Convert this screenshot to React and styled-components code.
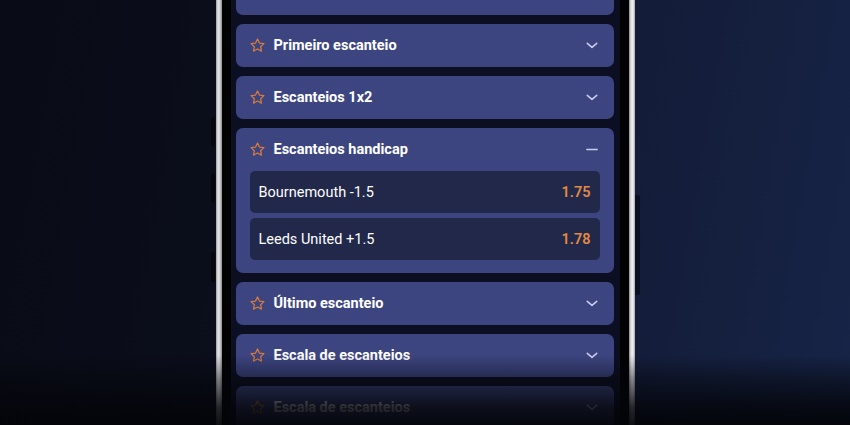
import React, { useState } from "react";
import styled, { createGlobalStyle } from "styled-components";

const markets = [
  { id: "top", title: "Escanteios asiáticos" },
  { id: "first", title: "Primeiro escanteio" },
  { id: "1x2", title: "Escanteios 1x2" },
  {
    id: "handicap",
    title: "Escanteios handicap",
    options: [
      { label: "Bournemouth -1.5", odd: "1.75" },
      { label: "Leeds United +1.5", odd: "1.78" },
    ],
  },
  { id: "last", title: "Último escanteio" },
  { id: "range", title: "Escala de escanteios" },
  { id: "range2", title: "Escala de escanteios" },
];

function Star() {
  return (
    <StarIcon viewBox="0 0 24 24">
      <path d="M12 2.8l2.75 5.75 6.3.8-4.62 4.38 1.17 6.25L12 16.92l-5.6 3.06 1.17-6.25L2.95 9.35l6.3-.8z" />
    </StarIcon>
  );
}

function Chevron() {
  return (
    <ToggleIcon viewBox="0 0 14 8">
      <path d="M1.5 1.5L7 6.2l5.5-4.7" />
    </ToggleIcon>
  );
}

function Minus() {
  return (
    <ToggleIcon viewBox="0 0 14 8">
      <path d="M1 4h12" />
    </ToggleIcon>
  );
}

function App() {
  const [open, setOpen] = useState("handicap");

  return (
    <Page>
      <GlobalStyle />
      <Phone>
        <Screen>
          <List>
            {markets.map((m) => {
              const isOpen = open === m.id && m.options;
              return (
                <Card key={m.id}>
                  <Header onClick={() => setOpen(isOpen ? null : m.id)}>
                    <Star />
                    <Title>{m.title}</Title>
                    {isOpen ? <Minus /> : <Chevron />}
                  </Header>
                  {isOpen && (
                    <Options>
                      {m.options.map((o) => (
                        <Option key={o.label}>
                          <span>{o.label}</span>
                          <Odd>{o.odd}</Odd>
                        </Option>
                      ))}
                    </Options>
                  )}
                </Card>
              );
            })}
          </List>
        </Screen>
      </Phone>
      <BottomFade />
    </Page>
  );
}

export default App;

const GlobalStyle = createGlobalStyle`
  html, body {
    margin: 0;
    padding: 0;
    background: #0a0c18;
  }
  body {
    font-family: Roboto, "Liberation Sans", sans-serif;
  }
`;

const Page = styled.div`
  position: relative;
  width: 850px;
  height: 425px;
  overflow: hidden;
  display: flex;
  justify-content: center;
  background: linear-gradient(100deg, #090b16 0%, #0b0e1c 35%, #121a34 62%, #172447 100%);
`;

const Phone = styled.div`
  position: relative;
  width: 419px;
  height: 425px;
  box-sizing: border-box;
  padding: 0 6px;
  background: linear-gradient(90deg, #9a9a9e 0px, #e6e6e8 2px, #cfcfd2 4px, #8c8c90 6px, transparent 6px, transparent 413px, #8c8c90 413px, #e2e2e4 415px, #f0f0f2 417px, #a4a4a8 419px);

  &::before {
    content: "";
    position: absolute;
    left: -5px;
    top: 117px;
    width: 4px;
    height: 30px;
    border-radius: 2px 0 0 2px;
    background: #06070d;
    box-shadow: 0 56px 0 0 #06070d, 0 135px 0 0 #06070d;
  }

  &::after {
    content: "";
    position: absolute;
    right: -5px;
    top: 195px;
    width: 5px;
    height: 100px;
    border-radius: 0 2px 2px 0;
    background: #0a0f22;
  }
`;

const Screen = styled.div`
  height: 100%;
  box-sizing: border-box;
  border-left: 9px solid #020203;
  border-right: 9px solid #020203;
  background: #0c0f22;
  padding: 0 6px 0 5px;
  overflow: hidden;
`;

const List = styled.div`
  display: flex;
  flex-direction: column;
  gap: 9px;
  margin-top: -28px;
`;

const Card = styled.div`
  background: #3d4581;
  border-radius: 7px;
  padding-bottom: ${(p) => (p.children[1] ? "13px" : "0")};
`;

const Header = styled.div`
  height: 43px;
  display: flex;
  align-items: center;
  padding: 0 16px 0 13px;
  cursor: pointer;
`;

const StarIcon = styled.svg`
  width: 17px;
  height: 17px;
  flex-shrink: 0;
  fill: none;
  stroke: #d67a3e;
  stroke-width: 1.8;
  stroke-linejoin: round;
`;

const Title = styled.span`
  flex: 1;
  margin-left: 8px;
  color: #ffffff;
  font-size: 14.5px;
  font-weight: 700;
`;

const ToggleIcon = styled.svg`
  width: 12px;
  height: 7px;
  fill: none;
  stroke: #c9cdee;
  stroke-width: 1.8;
  stroke-linecap: round;
  stroke-linejoin: round;
`;

const Options = styled.div`
  display: flex;
  flex-direction: column;
  gap: 5px;
  padding: 0 14px;
`;

const Option = styled.div`
  height: 42px;
  display: flex;
  align-items: center;
  justify-content: space-between;
  padding: 0 9px;
  background: #22284a;
  border-radius: 5px;
  color: #ffffff;
  font-size: 14.5px;
`;

const Odd = styled.span`
  color: #e38a45;
  font-weight: 600;
`;

const BottomFade = styled.div`
  position: absolute;
  left: 0;
  right: 0;
  bottom: 0;
  height: 70px;
  pointer-events: none;
  background: linear-gradient(180deg, rgba(4, 5, 10, 0) 0%, rgba(4, 5, 10, 0.45) 35%, rgba(4, 5, 10, 0.85) 75%, rgba(3, 4, 8, 0.95) 100%);
`;
